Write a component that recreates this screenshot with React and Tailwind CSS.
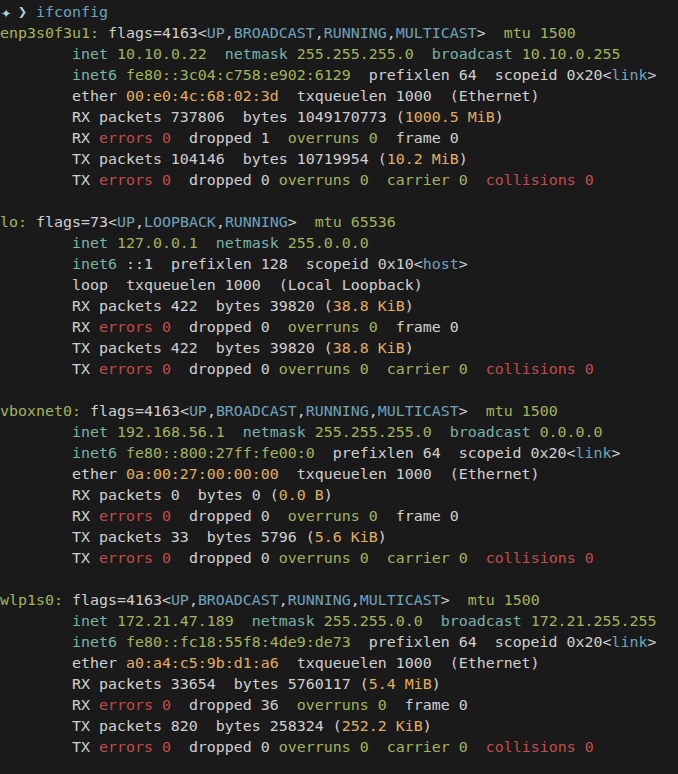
import React from 'react';

// colour keys for the terminal palette
const colors = {
  w: 'text-[#d0d0d0]',
  g: 'text-[#a3b45e]',
  t: 'text-[#78b3a8]',
  b: 'text-[#6fa2bd]',
  y: 'text-[#e2ad62]',
  r: 'text-[#c44b4b]',
};

const I = '        ';

const flags = (name, num, list, mtu) => {
  const segs = [[name, 'g'], [' flags=' + num + '<', 'w']];
  list.forEach((f, i) => {
    if (i > 0) segs.push([',', 'w']);
    segs.push([f, 'b']);
  });
  segs.push(['>  ', 'w'], ['mtu ' + mtu, 'g']);
  return segs;
};

const txErrors = [
  [I + 'TX ', 'w'], ['errors 0', 'r'], ['  dropped 0 ', 'w'], ['overruns 0', 'g'],
  ['  ', 'w'], ['carrier 0', 'g'], ['  ', 'w'], ['collisions 0', 'r'],
];

const rxErrors = (dropped) => [
  [I + 'RX ', 'w'], ['errors 0', 'r'], ['  dropped ' + dropped + '  ', 'w'],
  ['overruns 0', 'g'], ['  frame 0', 'w'],
];

const packets = (dir, p, bytes, human) => [
  [I + dir + ' packets ' + p + '  bytes ' + bytes + ' (', 'w'], [human, 'y'], [')', 'w'],
];

const inet6 = (addr, addrColor, prefix, scope, tag) => [
  [I + 'inet6 ', 't'], [addr, addrColor],
  ['  prefixlen ' + prefix + '  scopeid ' + scope + '<', 'w'], [tag, 'b'], ['>', 'w'],
];

const inet = (addr, mask, bcast) => {
  const segs = [[I + 'inet ', 't'], [addr, 'g'], ['  netmask ', 't'], [mask, 'g']];
  if (bcast) segs.push(['  broadcast ', 't'], [bcast, 'g']);
  return segs;
};

const ether = (mac) => [
  [I + 'ether ', 'w'], [mac, 'y'], ['  txqueuelen 1000  (Ethernet)', 'w'],
];

const multicast = ['UP', 'BROADCAST', 'RUNNING', 'MULTICAST'];

const lines = [
  flags('enp3s0f3u1:', '4163', multicast, '1500'),
  inet('10.10.0.22', '255.255.255.0', '10.10.0.255'),
  inet6('fe80::3c04:c758:e902:6129', 'g', '64', '0x20', 'link'),
  ether('00:e0:4c:68:02:3d'),
  packets('RX', '737806', '1049170773', '1000.5 MiB'),
  rxErrors('1'),
  packets('TX', '104146', '10719954', '10.2 MiB'),
  txErrors,
  [],
  flags('lo:', '73', ['UP', 'LOOPBACK', 'RUNNING'], '65536'),
  inet('127.0.0.1', '255.0.0.0'),
  inet6('::1', 'w', '128', '0x10', 'host'),
  [[I + 'loop  txqueuelen 1000  (Local Loopback)', 'w']],
  packets('RX', '422', '39820', '38.8 KiB'),
  rxErrors('0'),
  packets('TX', '422', '39820', '38.8 KiB'),
  txErrors,
  [],
  flags('vboxnet0:', '4163', multicast, '1500'),
  inet('192.168.56.1', '255.255.255.0', '0.0.0.0'),
  inet6('fe80::800:27ff:fe00:0', 'g', '64', '0x20', 'link'),
  ether('0a:00:27:00:00:00'),
  packets('RX', '0', '0', '0.0 B'),
  rxErrors('0'),
  packets('TX', '33', '5796', '5.6 KiB'),
  txErrors,
  [],
  flags('wlp1s0:', '4163', multicast, '1500'),
  inet('172.21.47.189', '255.255.0.0', '172.21.255.255'),
  inet6('fe80::fc18:55f8:4de9:de73', 'g', '64', '0x20', 'link'),
  ether('a0:a4:c5:9b:d1:a6'),
  packets('RX', '33654', '5760117', '5.4 MiB'),
  rxErrors('36'),
  packets('TX', '820', '258324', '252.2 KiB'),
  txErrors,
];

export default function App() {
  return (
    <div
      className="min-h-screen bg-[#1a1a1a] pt-[2px] text-[14.95px] leading-[21px] whitespace-pre text-[#d0d0d0]"
      style={{ fontFamily: '"DejaVu Sans Mono", "Liberation Mono", monospace' }}
    >
      <div className="flex h-[21px] items-center">
        <span className="inline-block w-[14px] pl-[1px] text-[17px] leading-[21px] text-[#a9d2e3]">✦</span>
        <span className="inline-block w-[4px]"> </span>
        <span className="inline-block w-[18px] text-[15px] leading-[21px] text-[#b9cdd6]">❯</span>
        <span className="text-[#6fa2bd]">ifconfig</span>
      </div>
      {lines.map((segs, i) => (
        <div key={i} className="h-[21px]">
          {segs.map(([text, c], j) => (
            <span key={j} className={colors[c]}>{text}</span>
          ))}
        </div>
      ))}
    </div>
  );
}
